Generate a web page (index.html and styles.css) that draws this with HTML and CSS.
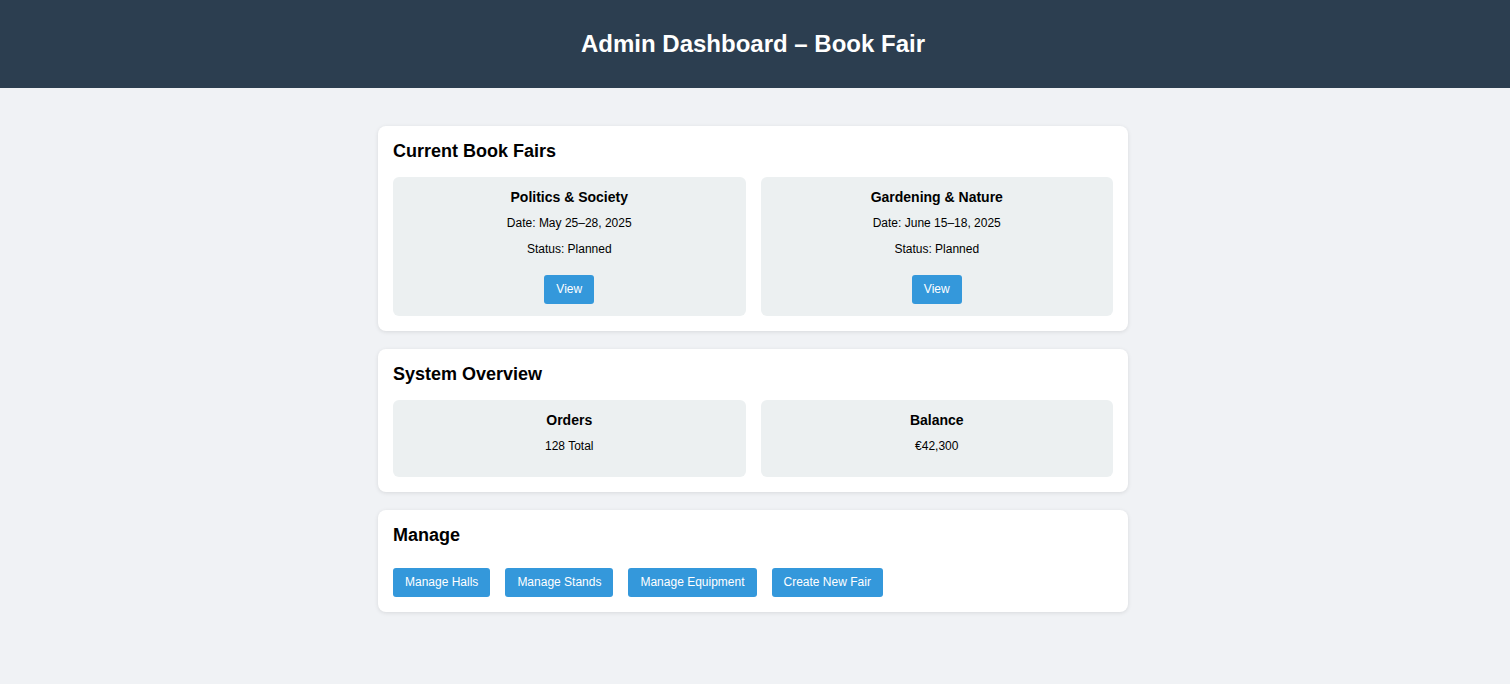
FILE: index.html
```html
<!DOCTYPE html>
<html lang="en">
<head>
<meta charset="utf-8">
<title>Admin Dashboard – Book Fair</title>
<link rel="stylesheet" href="styles.css">
</head>
<body>
<header class="topbar">
  <h1 class="topbar-title">Admin Dashboard – Book Fair</h1>
</header>
<main class="container">
  <section class="card">
    <h2 class="card-title">Current Book Fairs</h2>
    <div class="grid">
      <div class="item">
        <h3 class="item-title">Politics &amp; Society</h3>
        <p class="item-text">Date: May 25–28, 2025</p>
        <p class="item-text">Status: Planned</p>
        <div class="item-actions"><button class="btn">View</button></div>
      </div>
      <div class="item">
        <h3 class="item-title">Gardening &amp; Nature</h3>
        <p class="item-text">Date: June 15–18, 2025</p>
        <p class="item-text">Status: Planned</p>
        <div class="item-actions"><button class="btn">View</button></div>
      </div>
    </div>
  </section>
  <section class="card">
    <h2 class="card-title">System Overview</h2>
    <div class="grid">
      <div class="item">
        <h3 class="item-title">Orders</h3>
        <p class="item-text">128 Total</p>
      </div>
      <div class="item">
        <h3 class="item-title">Balance</h3>
        <p class="item-text">€42,300</p>
      </div>
    </div>
  </section>
  <section class="card">
    <h2 class="card-title">Manage</h2>
    <div class="actions">
      <button class="btn">Manage Halls</button>
      <button class="btn">Manage Stands</button>
      <button class="btn">Manage Equipment</button>
      <button class="btn">Create New Fair</button>
    </div>
  </section>
</main>
</body>
</html>
```
FILE: styles.css
```css
html, body {
  margin: 0;
  padding: 0;
}
body {
  background: #f0f2f5;
  font-family: "Liberation Sans", Arial, sans-serif;
  color: #000;
}
.topbar {
  background: #2c3e50;
  padding: 30px 4px 30px 0;
  text-align: center;
}
.topbar-title {
  margin: 0;
  font-size: 24px;
  font-weight: bold;
  color: #fff;
}
.container {
  width: 750px;
  margin: 38px auto 0;
  position: relative;
  left: -2px;
}
.card {
  background: #fff;
  border-radius: 8px;
  box-shadow: 0 1px 4px rgba(0, 0, 0, 0.1);
  padding: 15px;
  margin-bottom: 18.5px;
}
.card-title {
  margin: 0 0 15px;
  font-size: 18px;
  font-weight: bold;
}
.grid {
  display: grid;
  grid-template-columns: 1fr 1fr;
  gap: 15px;
}
.item {
  background: #ecf0f1;
  border-radius: 6px;
  padding: 11.5px 12px 11.5px;
  text-align: center;
}
.item-title {
  margin: 0;
  font-size: 14px;
  font-weight: bold;
}
.item-text {
  margin: 11.5px 0 12px;
  font-size: 12px;
}
.item-actions {
  margin: 19px 0 0;
}
.btn {
  box-sizing: border-box;
  height: 29px;
  background: #3498db;
  color: #fff;
  border: none;
  border-radius: 3px;
  font-family: "Liberation Sans", Arial, sans-serif;
  font-size: 12px;
  line-height: 15px;
  padding: 7px 12px;
  cursor: pointer;
}
.actions {
  display: flex;
  flex-wrap: wrap;
  gap: 15px;
  padding-top: 7px;
}
```
